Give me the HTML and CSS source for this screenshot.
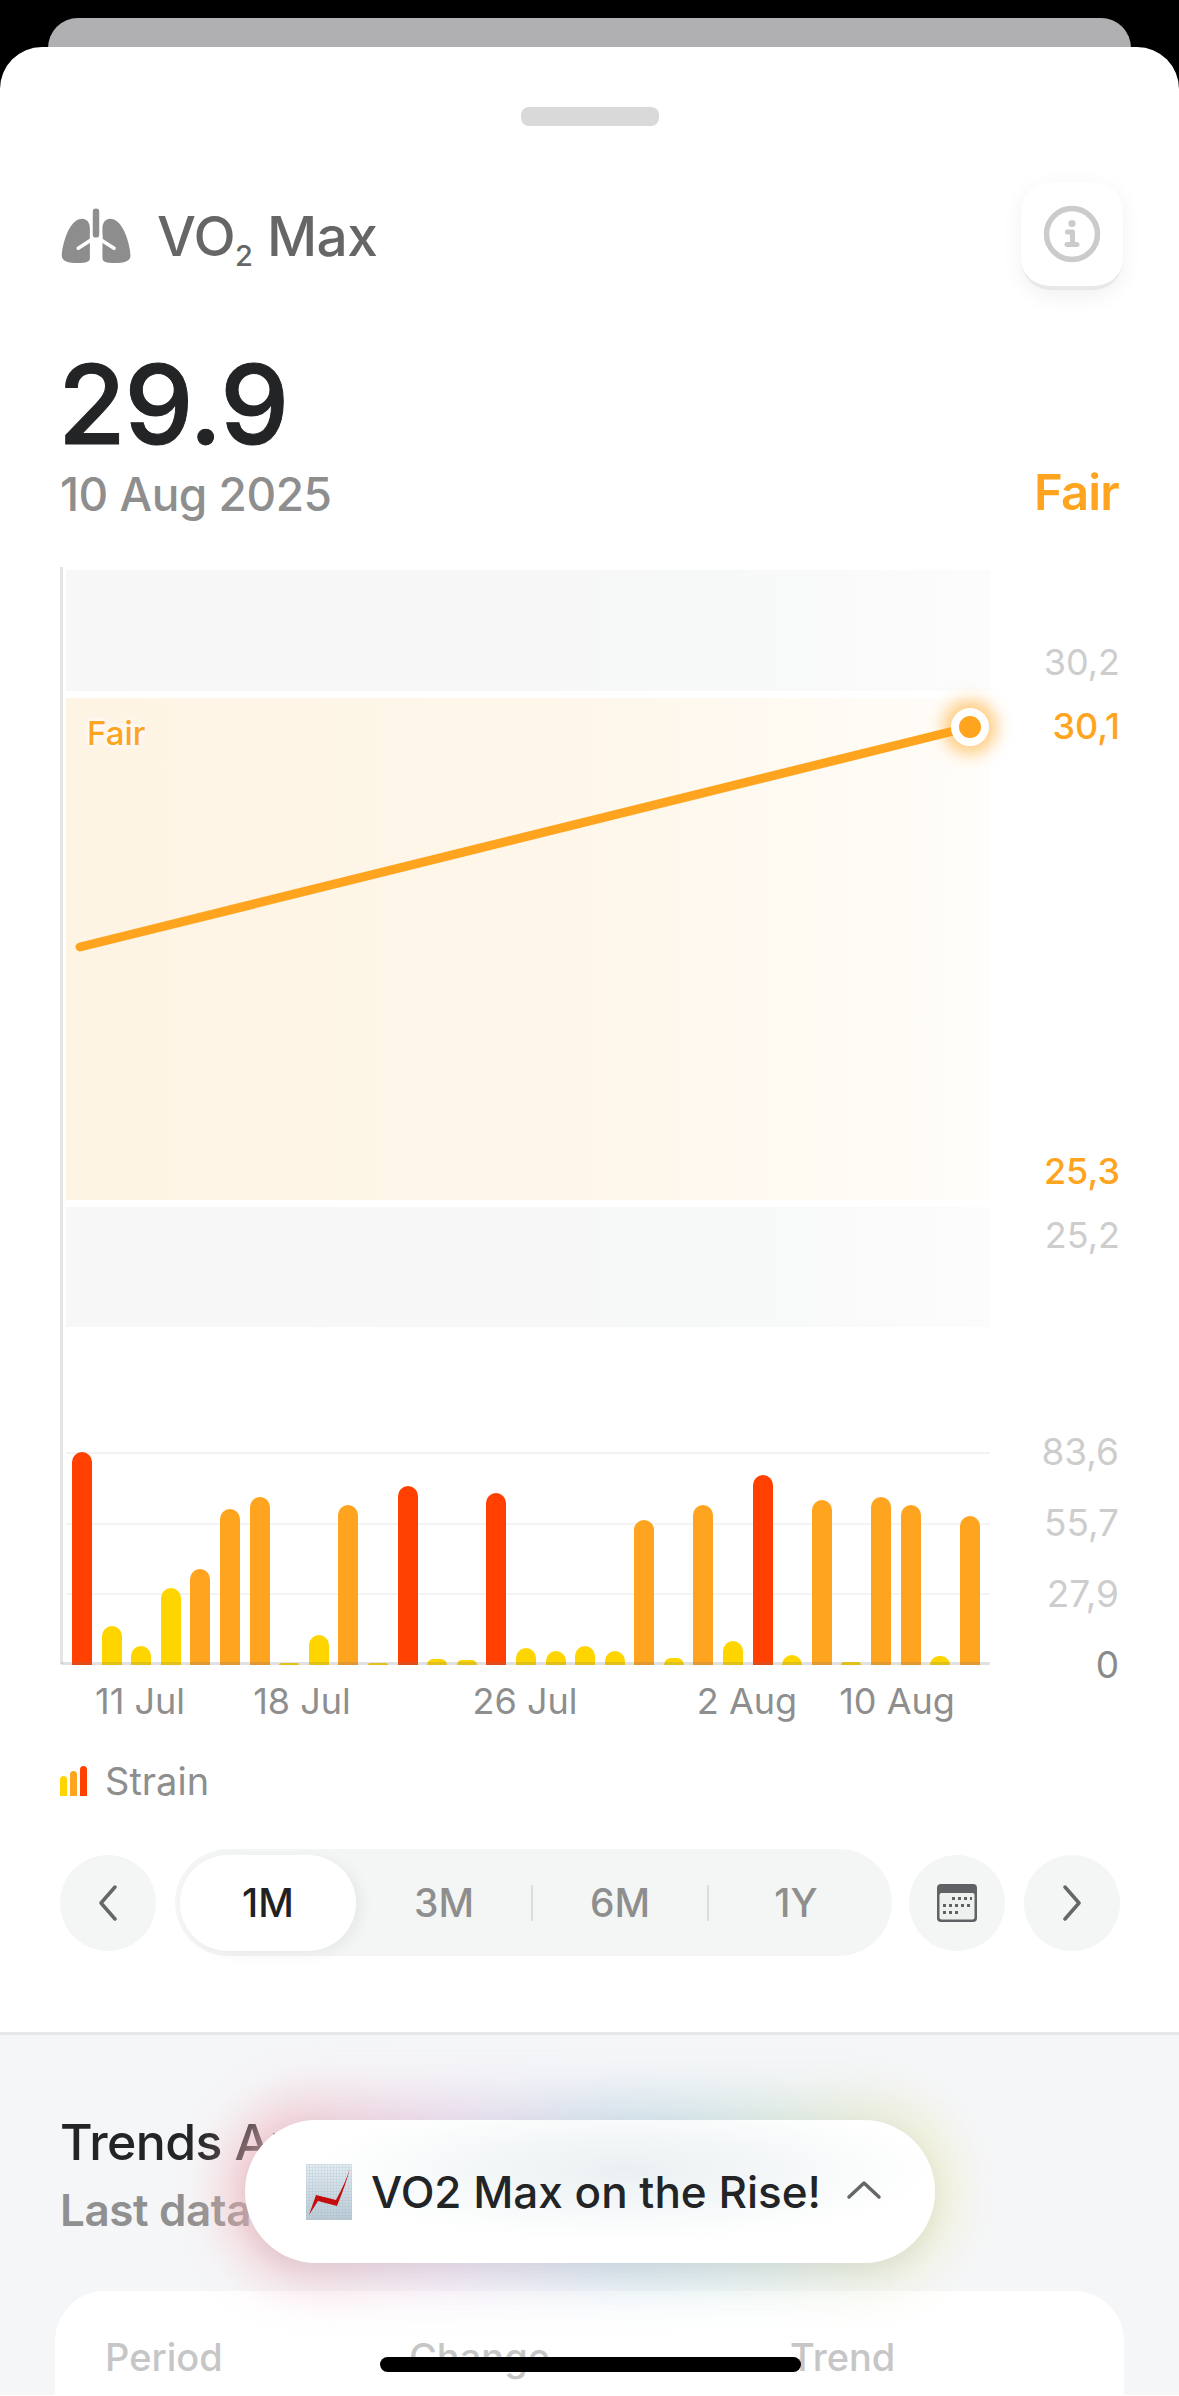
FILE: index.html
```html
<!DOCTYPE html>
<html lang="en">
<head>
  <meta charset="UTF-8">
  <meta name="viewport" content="width=device-width, initial-scale=1.0">
  <title>VO2 Max</title>
  <link rel="stylesheet" href="styles.css">
</head>
<body>
  <div class="back-card"></div>
  <main class="sheet">
    <section class="top">
      <div class="handle"></div>

      <div class="header">
        <div class="title">
          <svg class="lungs" viewBox="85 80 222 180">
            <g fill="#8d8d8d">
              <path id="lung" d="M150 117C165 115 177 127 177 146V240C177 250 165 254 140 254C110 254 90 248 90 232C90 200 112 118 150 117Z"/>
              <path d="M243 117C228 115 216 127 216 146V240C216 250 228 254 253 254C283 254 303 248 303 232C303 200 281 118 243 117Z"/>
            </g>
            <path d="M141 208L196 172L252 208" fill="none" stroke="#fff" stroke-width="11" stroke-linecap="round" stroke-linejoin="round"/>
            <path d="M177 165L196 172L216 165V185H177Z" fill="#fff"/>
            <path d="M196 95V158" stroke="#fff" stroke-width="34"/>
            <path d="M196 95V165" stroke="#8d8d8d" stroke-width="20" stroke-linecap="round"/>
          </svg>
          <h1>VO<sub>2</sub> Max</h1>
        </div>
        <button class="info-btn" type="button">
          <svg width="58" height="58" viewBox="0 0 58 58" fill="none" stroke="#cbcbcb" stroke-linecap="round" stroke-linejoin="round">
            <circle cx="29" cy="29" r="25.5" stroke-width="5.5"/>
            <circle cx="29" cy="18.5" r="3.6" fill="#cbcbcb" stroke="none"/>
            <path d="M24.5 27H29.5V39M24 39.5H34" stroke-width="5"/>
          </svg>
        </button>
      </div>

      <div class="value">29.9</div>
      <div class="date-row">
        <span class="date">10 Aug 2025</span>
        <span class="status">Fair</span>
      </div>

      <div class="chart">
        <div class="band-row row-upper">
          <div class="band band-grey"></div>
          <div class="labels"><span class="lbl-grey">30,2</span></div>
        </div>
        <div class="band-row row-fair">
          <div class="band band-fair"><span class="fair-tag">Fair</span></div>
          <div class="labels"><span class="lbl-orange">30,1</span><span class="lbl-orange">25,3</span></div>
          <svg class="trend" viewBox="0 0 1179 502">
            <path d="M80 249L970 29" stroke="#ffa41e" stroke-width="9" stroke-linecap="round"/>
          </svg>
          <div class="dot"></div>
        </div>
        <div class="band-row row-lower">
          <div class="band band-grey"></div>
          <div class="labels"><span class="lbl-grey">25,2</span></div>
        </div>

        <div class="strain-row">
          <div class="bars">
            <div class="bar red" style="height:213px"></div>
            <div class="bar yellow" style="height:39px"></div>
            <div class="bar yellow" style="height:19px"></div>
            <div class="bar yellow" style="height:77px"></div>
            <div class="bar orange" style="height:96px"></div>
            <div class="bar orange" style="height:156px"></div>
            <div class="bar orange" style="height:168px"></div>
            <div class="bar yellow" style="height:2px"></div>
            <div class="bar yellow" style="height:30px"></div>
            <div class="bar orange" style="height:160px"></div>
            <div class="bar yellow" style="height:2px"></div>
            <div class="bar red" style="height:179px"></div>
            <div class="bar yellow" style="height:6px"></div>
            <div class="bar yellow" style="height:5px"></div>
            <div class="bar red" style="height:172px"></div>
            <div class="bar yellow" style="height:17px"></div>
            <div class="bar yellow" style="height:14px"></div>
            <div class="bar yellow" style="height:19px"></div>
            <div class="bar yellow" style="height:14px"></div>
            <div class="bar orange" style="height:145px"></div>
            <div class="bar yellow" style="height:7px"></div>
            <div class="bar orange" style="height:160px"></div>
            <div class="bar yellow" style="height:24px"></div>
            <div class="bar red" style="height:190px"></div>
            <div class="bar yellow" style="height:10px"></div>
            <div class="bar orange" style="height:165px"></div>
            <div class="bar yellow" style="height:3px"></div>
            <div class="bar orange" style="height:168px"></div>
            <div class="bar orange" style="height:160px"></div>
            <div class="bar yellow" style="height:9px"></div>
            <div class="bar orange" style="height:149px"></div>
          </div>
          <div class="strain-labels">
            <span>83,6</span>
            <span>55,7</span>
            <span>27,9</span>
            <span class="zero">0</span>
          </div>
        </div>
      </div>

      <div class="x-labels">
        <span>11 Jul</span>
        <span>18 Jul</span>
        <span>26 Jul</span>
        <span>2 Aug</span>
        <span>10 Aug</span>
      </div>

      <div class="legend">
        <span class="legend-icon"><i class="yellow"></i><i class="orange"></i><i class="red"></i></span>
        <span>Strain</span>
      </div>

      <div class="controls">
        <button class="round-btn" type="button">
          <svg width="20" height="36" viewBox="0 0 20 36" fill="none" stroke="#666" stroke-width="3.5" stroke-linecap="round" stroke-linejoin="round"><path d="M17 2L3 18L17 34"/></svg>
        </button>
        <div class="periods">
          <span class="period active">1M</span>
          <span class="period">3M</span>
          <span class="period split">6M</span>
          <span class="period split">1Y</span>
        </div>
        <button class="round-btn" type="button">
          <svg width="42" height="40" viewBox="0 0 42 40">
            <rect x="1" y="1" width="40" height="38" rx="4" fill="#5f6164"/>
            <rect x="3.5" y="10" width="35" height="26.500" rx="2" fill="#eef0f0"/>
            <g fill="#5f6164">
              <rect x="16" y="14" width="3" height="3"/><rect x="22" y="14" width="3" height="3"/><rect x="28" y="14" width="3" height="3"/><rect x="34" y="14" width="2" height="3"/>
              <rect x="7" y="21" width="3" height="3"/><rect x="13" y="21" width="3" height="3"/><rect x="19" y="21" width="3" height="3"/><rect x="25" y="21" width="3" height="3"/><rect x="31" y="21" width="3" height="3"/>
              <rect x="7" y="28" width="3" height="3"/><rect x="13" y="28" width="3" height="3"/><rect x="19" y="28" width="3" height="3"/>
            </g>
          </svg>
        </button>
        <button class="round-btn" type="button">
          <svg width="20" height="36" viewBox="0 0 20 36" fill="none" stroke="#666" stroke-width="3.5" stroke-linecap="round" stroke-linejoin="round"><path d="M3 2L17 18L3 34"/></svg>
        </button>
      </div>
    </section>

    <section class="trends">
      <h2>Trends Analysis</h2>
      <p class="sub">Last data: 10 Aug 2025</p>
      <div class="table-card">
        <div class="table-head">
          <span>Period</span>
          <span>Change</span>
          <span>Trend</span>
        </div>
      </div>
    </section>
  </main>

  <div class="toast-glow"></div>
  <div class="toast">
    <svg class="emoji" width="46" height="56" viewBox="0 0 46 56">
      <defs>
        <pattern id="cells" width="3" height="3" patternUnits="userSpaceOnUse">
          <path d="M3 0H0V3" fill="none" stroke="#8fa9bd" stroke-width="0.6"/>
        </pattern>
        <linearGradient id="paper" x1="0" y1="0" x2="0" y2="1">
          <stop offset="0" stop-color="#e3ecf2"/>
          <stop offset="1" stop-color="#bccbd6"/>
        </linearGradient>
      </defs>
      <rect width="46" height="56" fill="url(#paper)"/>
      <rect width="46" height="56" fill="url(#cells)" opacity="0.6"/>
      <path d="M44 4C41 16 37 27 31 42L12 37L3 51L10 31L30 36C36 25 41 14 44 4Z" fill="#c40d0d"/>
    </svg>
    <span class="toast-text">VO2 Max on the Rise!</span>
    <svg class="toast-chevron" width="36" height="20" viewBox="0 0 36 20" fill="none" stroke="#666" stroke-width="3.500" stroke-linecap="round" stroke-linejoin="round"><path d="M3 17L18 3L33 17"/></svg>
  </div>
  <div class="home-bar"></div>
</body>
</html>
```

FILE: styles.css
```css
* {
  box-sizing: border-box;
}
html, body {
  margin: 0;
  height: 2396px;
  overflow: hidden;
}
body {
  position: relative;
  background: #000;
  font-family: Inter, "Liberation Sans", sans-serif;
  padding-top: 18px;
}
.back-card {
  height: 60px;
  margin: 0 48px -31px;
  background: #b0b0b3;
  border-radius: 30px 30px 0 0;
}
.sheet {
  position: relative;
  height: 2349px;
  background: #fff;
  border-radius: 42px 42px 0 0;
  overflow: hidden;
}
.top {
  height: 1988px;
  padding: 60px 60px 0;
  border-bottom: 3px solid #e6e7e9;
}
.handle {
  width: 138px;
  height: 19px;
  margin: 0 auto;
  background: #d9d9d9;
  border-radius: 8px;
}

/* header */
.header {
  display: flex;
  align-items: center;
  justify-content: space-between;
  height: 106px;
  margin-top: 56px;
}
.title {
  display: flex;
  align-items: center;
  gap: 25px;
  padding-top: 2px;
}
.lungs {
  width: 72px;
  height: 58px;
}
h1 {
  margin: 0;
  font-size: 55px;
  font-weight: 500;
  color: #666;
  letter-spacing: -0.6px;
  line-height: 60px;
}
h1 sub {
  font-size: 29px;
  line-height: 0;
  vertical-align: -10px;
  letter-spacing: 0;
}
.info-btn {
  display: flex;
  align-items: center;
  justify-content: center;
  width: 102px;
  height: 108px;
  margin: 2px -4px 0 0;
  padding: 0;
  background: #fff;
  border: 0;
  border-bottom: 4px solid #e8e8e8;
  border-radius: 30px;
  box-shadow: 0 6px 22px rgba(0, 0, 0, 0.06);
}

.value {
  margin: 62px 0 0 -2px;
  font-size: 110px;
  font-weight: 500;
  line-height: 108px;
  letter-spacing: -1.5px;
  color: #222426;
  -webkit-text-stroke: 1px #222426;
}
.date-row {
  display: flex;
  align-items: center;
  justify-content: space-between;
  height: 50px;
  margin-top: 11px;
}
.date {
  font-size: 46px;
  font-weight: 500;
  color: #8e8e8e;
  letter-spacing: -0.5px;
}
.status {
  margin-top: -4px;
  font-size: 49px;
  font-weight: 600;
  color: #ffa41e;
  letter-spacing: -0.8px;
}

/* chart */
.chart {
  height: 1097px;
  margin-top: 48px;
  padding: 3px 0 0 3px;
  border-left: 3px solid #e4e4e4;
}
.band-row {
  display: flex;
  position: relative;
  margin-bottom: 7px;
  margin-right: -60px;
}
.row-upper {
  height: 121px;
}
.row-fair {
  height: 502px;
}
.row-lower {
  height: 120px;
}
.band {
  width: 924px;
  flex: none;
}
.band-grey {
  background: linear-gradient(90deg, #f7f7f7, #f7f8f8 70%, #fcfcfc);
}
.band-fair {
  padding: 15px 0 0 21px;
  background: linear-gradient(90deg, #fef4e4, #fef7eb 60%, #fffdfa);
}
.fair-tag {
  font-size: 33px;
  font-weight: 500;
  color: #ffa41e;
  text-shadow: 0 0 6px #fff, 0 0 6px #fff, 0 0 3px #fff;
}
.labels {
  display: flex;
  flex-direction: column;
  justify-content: space-between;
  width: 128px;
  margin-left: 2px;
  text-align: right;
  font-size: 36px;
  font-weight: 400;
}
.row-upper .labels {
  justify-content: flex-end;
  padding-bottom: 7px;
}
.row-fair .labels {
  padding: 6px 0 7px 0;
}
.row-lower .labels {
  padding-top: 6px;
}
.lbl-grey {
  color: #cdcdcd;
}
.lbl-orange {
  color: #ffa41e;
  font-weight: 500;
}
.trend {
  position: absolute;
  left: -66px;
  top: 0;
  width: 1179px;
  height: 502px;
}
.dot {
  position: absolute;
  left: 885px;
  top: 10px;
  width: 38px;
  height: 38px;
  background: #ffa41e;
  border: 8px solid #fff;
  border-radius: 50%;
  box-shadow: 0 0 16px 8px rgba(255, 164, 30, 0.55);
}

/* strain bars */
.strain-row {
  display: flex;
  margin: 125px -60px 0 0;
}
.bars {
  position: relative;
  display: flex;
  align-items: flex-end;
  gap: 9.6px;
  width: 924px;
  height: 213px;
  padding-left: 6px;
  flex: none;
  background:
    linear-gradient(#f2f2f2, #f2f2f2) 0 0 / 100% 2px no-repeat,
    linear-gradient(#f4f4f4, #f4f4f4) 0 71px / 100% 2px no-repeat,
    linear-gradient(#f4f4f4, #f4f4f4) 0 141px / 100% 2px no-repeat;
}
.bars::after {
  content: "";
  position: absolute;
  left: -5px;
  right: 0;
  bottom: 0;
  height: 3px;
  background: rgba(120, 120, 120, 0.22);
}
.bar {
  width: 20px;
  flex: none;
  border-radius: 10px 10px 0 0;
}
.red {
  background: #ff4000;
}
.orange {
  background: #ffa41e;
}
.yellow {
  background: #ffd500;
}
.strain-labels {
  display: flex;
  flex-direction: column;
  justify-content: space-between;
  width: 127px;
  height: 257px;
  margin: -22px 0 -22px 2px;
  text-align: right;
  font-size: 37px;
  line-height: 44px;
  color: #cdcdcd;
}
.strain-labels .zero {
  color: #8a8a8a;
}
.x-labels {
  display: grid;
  grid-template-columns: 156px 168px 278px 166px 134px;
  margin: 15px 0 0 2px;
  text-align: center;
  font-size: 36px;
  line-height: 44px;
  white-space: nowrap;
  color: #8e8e8e;
}
.legend {
  display: flex;
  align-items: center;
  gap: 18px;
  margin-top: 36px;
  font-size: 38px;
  line-height: 44px;
  color: #8e8e8e;
}
.legend-icon {
  display: flex;
  align-items: flex-end;
  gap: 3px;
  height: 30px;
}
.legend-icon i {
  width: 7px;
  border-radius: 4px 4px 0 0;
}
.legend-icon .yellow {
  height: 20px;
}
.legend-icon .orange {
  height: 25px;
}
.legend-icon .red {
  height: 30px;
}

/* range controls */
.controls {
  display: flex;
  align-items: center;
  gap: 19px;
  margin-top: 46px;
}
.round-btn {
  display: flex;
  align-items: center;
  justify-content: center;
  width: 96px;
  height: 96px;
  flex: none;
  padding: 0;
  background: #f4f6f5;
  border: 0;
  border-radius: 50%;
}
.periods {
  display: flex;
  align-items: center;
  flex: none;
  width: 717px;
  height: 107px;
  margin-right: -2px;
  padding: 0 5px;
  background: #f4f6f5;
  border-radius: 54px;
}
.period {
  position: relative;
  display: flex;
  align-items: center;
  justify-content: center;
  width: 176px;
  height: 96px;
  font-size: 39px;
  font-weight: 500;
  color: #8e8e8e;
}
.period.active {
  background: #fff;
  border-radius: 48px;
  box-shadow: 6px 3px 14px rgba(0, 0, 0, 0.05);
  color: #1f2123;
}
.split::before {
  content: "";
  position: absolute;
  left: -1px;
  top: 30px;
  width: 2px;
  height: 36px;
  background: #dcdcdc;
}

/* lower section */
.trends {
  height: 360px;
  padding: 82px 55px 0;
  background: #f5f6f8;
}
.trends h2 {
  margin: 0 0 0 5px;
  font-size: 50px;
  font-weight: 500;
  line-height: 50px;
  letter-spacing: -0.6px;
  color: #222426;
}
.sub {
  margin: 18px 0 0 5px;
  font-size: 44px;
  font-weight: 600;
  line-height: 50px;
  letter-spacing: -0.4px;
  color: #909090;
}
.table-card {
  height: 200px;
  margin-top: 56px;
  padding: 44px 50px;
  background: #fff;
  border-radius: 50px;
}
.table-head {
  display: grid;
  grid-template-columns: 304px 381px 1fr;
  font-size: 38px;
  font-weight: 500;
  line-height: 44px;
  color: #c6c6c6;
}

/* floating things */
.toast-glow {
  position: absolute;
  left: 225px;
  top: 2095px;
  width: 730px;
  height: 190px;
  border-radius: 90px;
  background: linear-gradient(90deg, #f2b4b8, #e2d0e8 32%, #bfd6e4 55%, #c8dfdc 70%, #efecbe 100%);
  filter: blur(24px);
  opacity: 0.7;
}
.toast {
  position: absolute;
  left: 245px;
  top: 2120px;
  display: flex;
  align-items: center;
  width: 690px;
  height: 143px;
  padding-left: 61px;
  background: radial-gradient(ellipse 45% 50% at 55% 35%, #eaf0f2, #fff);
  border-radius: 72px;
  box-shadow: 0 8px 24px rgba(0, 0, 0, 0.06);
}
.emoji {
  flex: none;
}
.toast-text {
  margin: 0 25px 0 19px;
  font-size: 44px;
  font-weight: 500;
  white-space: nowrap;
  color: #222426;
}
.toast-chevron {
  margin-top: -4px;
}
.home-bar {
  position: absolute;
  left: 380px;
  top: 2357px;
  width: 421px;
  height: 15px;
  background: #000;
  border-radius: 8px;
}
```
